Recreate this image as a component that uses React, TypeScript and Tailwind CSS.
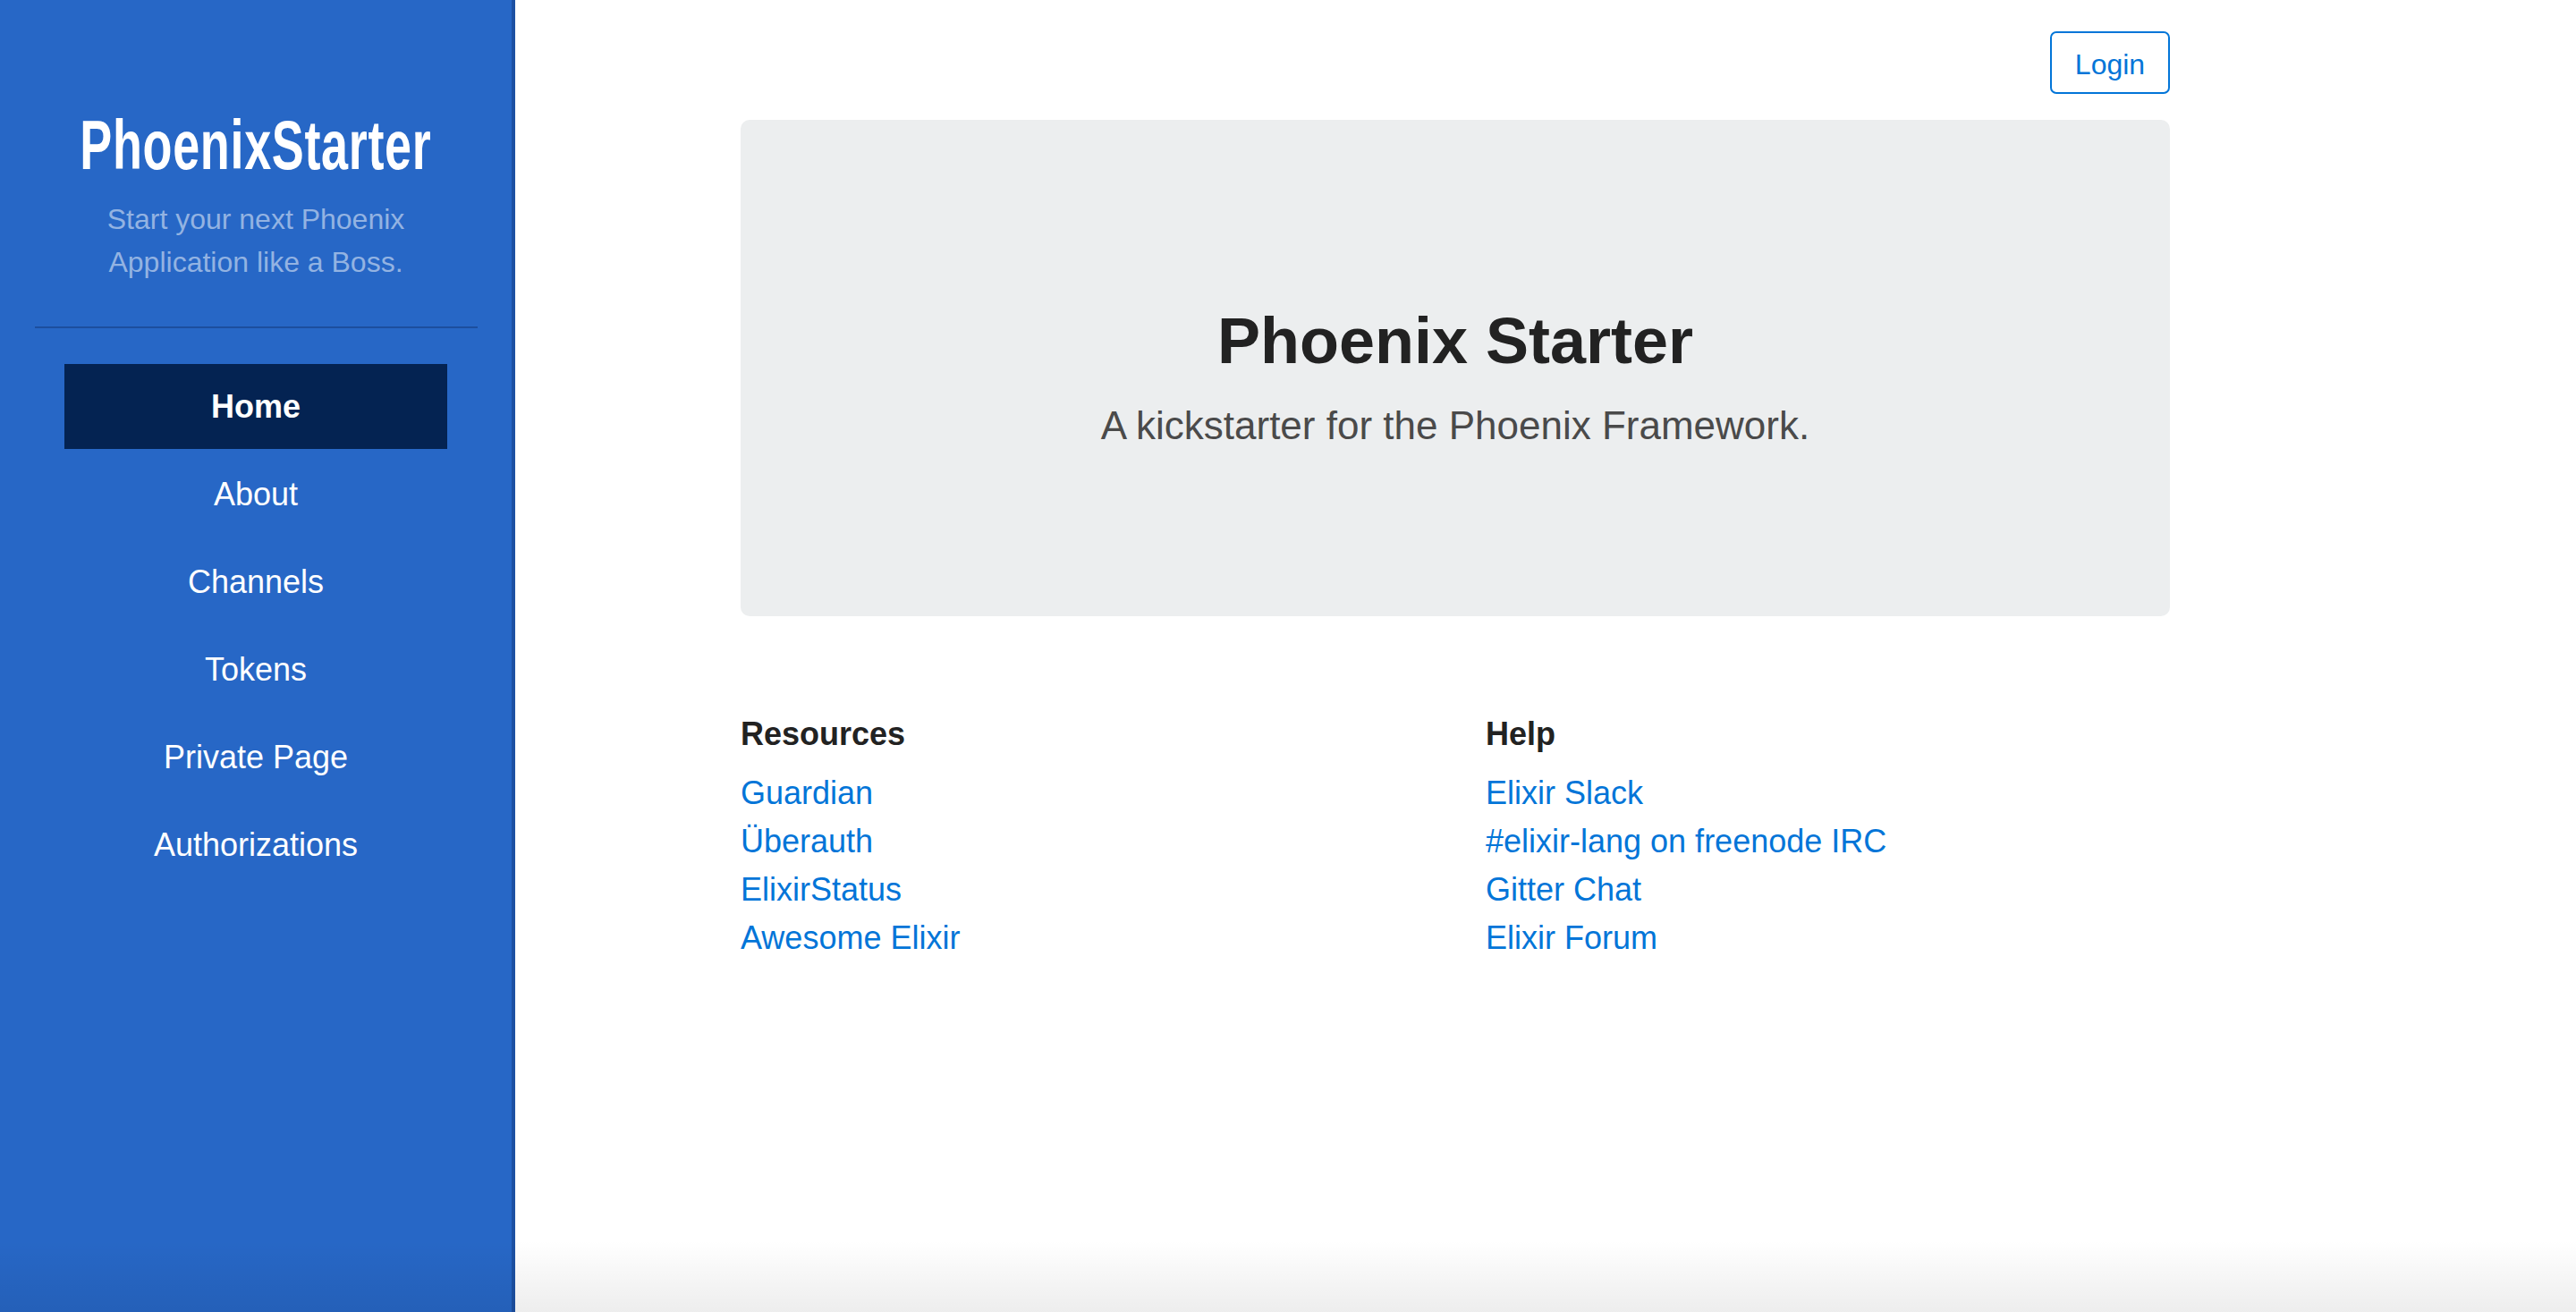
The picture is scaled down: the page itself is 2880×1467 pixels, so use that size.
import React from "react";

const navItems = ["Home", "About", "Channels", "Tokens", "Private Page", "Authorizations"];

const resources = ["Guardian", "Überauth", "ElixirStatus", "Awesome Elixir"];
const help = ["Elixir Slack", "#elixir-lang on freenode IRC", "Gitter Chat", "Elixir Forum"];

function Sidebar() {
  return (
    <aside className="w-[576px] shrink-0 bg-[#2767c6] border-r-4 border-[#1d51a3] flex flex-col items-center pt-[124px]">
      <h1 className="text-[77px] leading-none font-bold text-white scale-x-[0.7] whitespace-nowrap tracking-[1px]">
        PhoenixStarter
      </h1>
      <p className="mt-[20px] text-center text-[32px] leading-[48px] text-[#93b3e2]">
        Start your next Phoenix
        <br />
        Application like a Boss.
      </p>
      <div className="mt-[48px] w-[495px] h-[2px] bg-[#1c4f9e]" />
      <nav className="mt-[40px] w-[428px] flex flex-col gap-[3px]">
        {navItems.map((item, i) => (
          <a
            key={item}
            href="#"
            className={
              i === 0
                ? "h-[95px] flex items-center justify-center bg-[#042352] text-white text-[36px] font-bold"
                : "h-[95px] flex items-center justify-center text-white text-[36px]"
            }
          >
            {item}
          </a>
        ))}
      </nav>
    </aside>
  );
}

function LinkColumn({ title, links }: { title: string; links: string[] }) {
  return (
    <div>
      <h4 className="text-[36px] leading-[44px] font-bold text-[#222]">{title}</h4>
      <ul className="mt-[17px]">
        {links.map((link) => (
          <li key={link} className="text-[36px] leading-[54px]">
            <a href="#" className="text-[#0275d8]">
              {link}
            </a>
          </li>
        ))}
      </ul>
    </div>
  );
}

export default function App() {
  return (
    <div
      className="relative flex h-[1467px] w-full overflow-hidden bg-white"
      style={{ fontFamily: '"Liberation Sans", Arial, sans-serif' }}
    >
      <Sidebar />

      <main className="flex-1 pl-[252px]">
        <div className="w-[1598px]">
          <div className="flex justify-end pt-[35px]">
            <button className="h-[70px] w-[134px] rounded-[7px] border-2 border-[#0275d8] pt-[3px] text-[32px] text-[#0275d8]">
              Login
            </button>
          </div>

          <section className="mt-[29px] h-[555px] rounded-[10px] bg-[#eceeef] pt-[207px] text-center">
            <h2 className="text-[72px] leading-[80px] font-bold text-[#222]">Phoenix Starter</h2>
            <p className="mt-[25px] text-[44px] leading-[60px] font-light text-[#4a4a4a]">
              A kickstarter for the Phoenix Framework.
            </p>
          </section>

          <div className="mt-[110px] grid grid-cols-2 gap-x-[68px]">
            <LinkColumn title="Resources" links={resources} />
            <LinkColumn title="Help" links={help} />
          </div>
        </div>
      </main>

      {/* window shadow at the bottom edge */}
      <div className="pointer-events-none absolute inset-x-0 bottom-0 h-[80px] bg-gradient-to-b from-transparent to-black/[0.07]" />
    </div>
  );
}
